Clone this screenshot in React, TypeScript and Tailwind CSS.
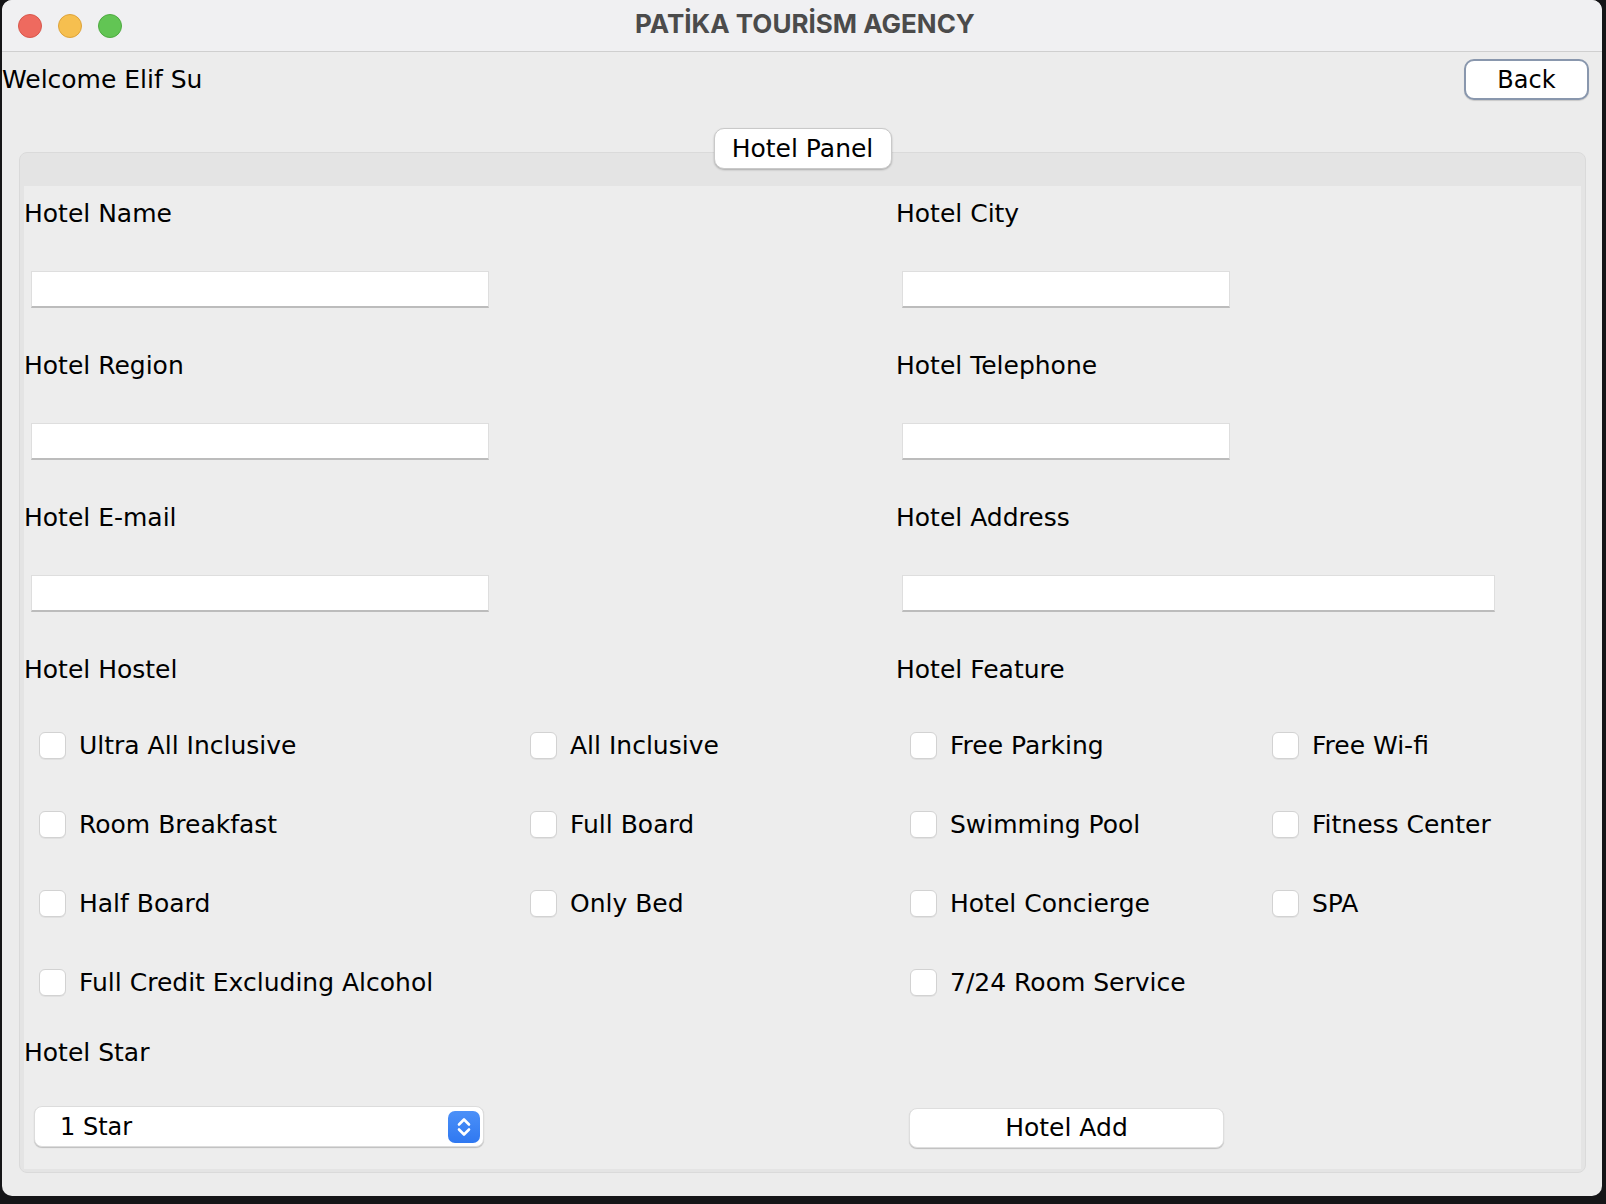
import React from 'react';

const hostelOptions = [
  'Ultra All Inclusive',
  'All Inclusive',
  'Room Breakfast',
  'Full Board',
  'Half Board',
  'Only Bed',
  'Full Credit Excluding Alcohol',
];

const featureOptions = [
  'Free Parking',
  'Free Wi-fi',
  'Swimming Pool',
  'Fitness Center',
  'Hotel Concierge',
  'SPA',
  '7/24 Room Service',
];

const Check = ({ label }: { label: string }) => (
  <label className="flex items-center h-[40px] gap-[13px]">
    <span className="w-[27px] h-[27px] shrink-0 rounded-[6px] bg-white border border-[#d2d2d2] shadow-[0_1px_0_rgba(0,0,0,0.05)]" />
    <span className="text-[25px] leading-none text-black">{label}</span>
  </label>
);

const Field = ({ label, inputClass }: { label: string; inputClass: string }) => (
  <div className="h-[152px] pt-[10px]">
    <div className="h-[36px] flex items-center text-[25px] text-black">{label}</div>
    <input
      className={`mt-[39px] h-[37px] bg-white border border-[#dedede] border-b-2 border-b-[#bcbcbc] outline-none block ${inputClass}`}
    />
  </div>
);

const App = () => {
  return (
    <div className="w-[1606px] h-[1204px] bg-[#151517] overflow-hidden font-['DejaVu_Sans',sans-serif]">
      <div className="ml-[2px] w-[1600px] h-[1196px] rounded-[10px] bg-[#ececec] overflow-hidden flex flex-col">
        {/* title bar */}
        <div className="h-[52px] shrink-0 bg-[#f0f0f2] border-b border-[#cfcfcf] grid grid-cols-[1fr_auto_1fr] items-center">
          <div className="flex gap-[16px] pl-[16px]">
            <span className="w-[24px] h-[24px] rounded-full bg-[#ee6a5f] border border-[#d8574c]" />
            <span className="w-[24px] h-[24px] rounded-full bg-[#f6bf4f] border border-[#dea33a]" />
            <span className="w-[24px] h-[24px] rounded-full bg-[#62c554] border border-[#4eaa41]" />
          </div>
          <div className="font-['Inter',sans-serif] font-bold text-[26px] text-[#4b4b4b] pb-[4px] pl-[6px]">
            PATİKA TOURİSM AGENCY
          </div>
          <div />
        </div>

        {/* welcome row */}
        <div className="mt-[7px] h-[41px] flex items-center justify-between pr-[13px]">
          <span className="text-[25px] text-black">Welcome Elif Su</span>
          <button className="w-[125px] h-[41px] rounded-[10px] bg-white border-2 border-[#8997ad] text-[24px] text-black shadow-[0_1px_1px_rgba(0,0,0,0.15)]">
            Back
          </button>
        </div>

        {/* panel */}
        <div className="mt-[28px] ml-[17px] mr-[16px] flex flex-col items-center">
          <div className="relative z-10 w-[178px] h-[41px] rounded-[10px] bg-white border border-[#c9c9c9] shadow-[0_1px_2px_rgba(0,0,0,0.25)] flex items-center justify-center text-[25px] text-black">
            Hotel Panel
          </div>
          <div className="-mt-[17px] w-full h-[1021px] bg-[#e4e4e4] border border-[#dadada] rounded-[8px] pt-[33px] px-[4px] pb-[3px]">
            <div className="h-full bg-[#ededed] grid grid-cols-[872px_1fr]">
              {/* left column */}
              <div>
                <Field label="Hotel Name" inputClass="ml-[7px] w-[458px]" />
                <Field label="Hotel Region" inputClass="ml-[7px] w-[458px]" />
                <Field label="Hotel E-mail" inputClass="ml-[7px] w-[458px]" />
                <div className="pt-[10px]">
                  <div className="h-[36px] flex items-center text-[25px] text-black">Hotel Hostel</div>
                  <div className="mt-[37px] pl-[15px] grid grid-cols-[491px_1fr] gap-y-[39px]">
                    {hostelOptions.map((o) => (
                      <Check key={o} label={o} />
                    ))}
                  </div>
                </div>
                <div className="mt-[33px]">
                  <div className="h-[36px] flex items-center text-[25px] text-black">Hotel Star</div>
                  <div className="mt-[35px] ml-[10px] w-[450px] h-[41px] rounded-[8px] bg-white border border-[#dcdcdc] shadow-[0_1px_1px_rgba(0,0,0,0.2)] flex items-center justify-between pl-[25px] pr-[3px]">
                    <span className="text-[24px] text-black">1 Star</span>
                    <span className="w-[32px] h-[32px] rounded-[7px] bg-gradient-to-b from-[#4b90f8] to-[#2f78f1] flex items-center justify-center">
                      <svg width="32" height="32" viewBox="0 0 32 32" fill="none">
                        <path d="M11 13.5 L16 8.5 L21 13.5" stroke="white" strokeWidth="2.6" strokeLinecap="round" strokeLinejoin="round" />
                        <path d="M11 18.5 L16 23.5 L21 18.5" stroke="white" strokeWidth="2.6" strokeLinecap="round" strokeLinejoin="round" />
                      </svg>
                    </span>
                  </div>
                </div>
              </div>

              {/* right column */}
              <div>
                <Field label="Hotel City" inputClass="ml-[6px] w-[328px]" />
                <Field label="Hotel Telephone" inputClass="ml-[6px] w-[328px]" />
                <Field label="Hotel Address" inputClass="ml-[6px] w-[593px]" />
                <div className="pt-[10px]">
                  <div className="h-[36px] flex items-center text-[25px] text-black">Hotel Feature</div>
                  <div className="mt-[37px] pl-[14px] grid grid-cols-[362px_1fr] gap-y-[39px]">
                    {featureOptions.map((o) => (
                      <Check key={o} label={o} />
                    ))}
                  </div>
                </div>
                <div className="mt-[33px] pt-[73px]">
                  <button className="block ml-[13px] w-[315px] h-[40px] rounded-[8px] bg-white border border-[#dedede] shadow-[0_1px_1px_rgba(0,0,0,0.2)] text-[25px] text-black">
                    Hotel Add
                  </button>
                </div>
              </div>
            </div>
          </div>
        </div>
      </div>
    </div>
  );
};

export default App;
